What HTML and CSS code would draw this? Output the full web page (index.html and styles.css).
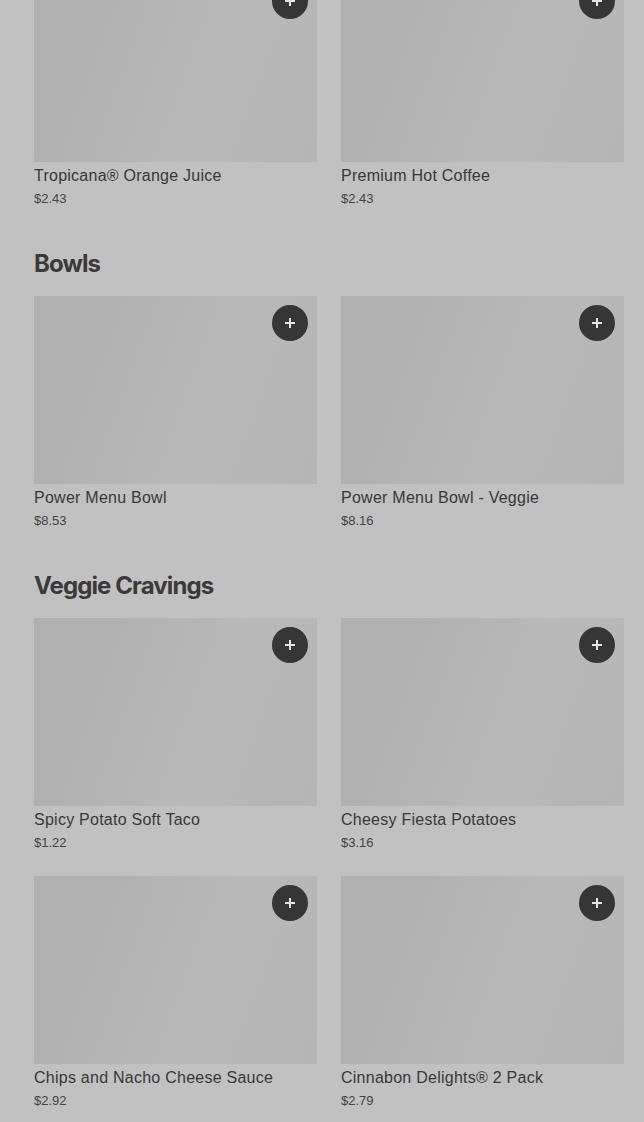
FILE: index.html
```html
<!DOCTYPE html>
<html lang="en">
<head>
<meta charset="UTF-8">
<meta name="viewport" content="width=device-width, initial-scale=1.0">
<title>Menu</title>
<link rel="stylesheet" href="styles.css">
</head>
<body>
<div class="menu">
    <section class="section first">
        <div class="grid">
            <div class="card">
                <div class="thumb"><button class="add" aria-label="Add"><svg viewBox="0 0 12 12" width="12" height="12"><path d="M6 1v10M1 6h10"/></svg></button></div>
                <div class="name">Tropicana® Orange Juice</div>
                <div class="price">$2.43</div>
            </div>
            <div class="card">
                <div class="thumb"><button class="add" aria-label="Add"><svg viewBox="0 0 12 12" width="12" height="12"><path d="M6 1v10M1 6h10"/></svg></button></div>
                <div class="name">Premium Hot Coffee</div>
                <div class="price">$2.43</div>
            </div>
        </div>
    </section>

    <section class="section">
        <h2>Bowls</h2>
        <div class="grid">
            <div class="card">
                <div class="thumb"><button class="add" aria-label="Add"><svg viewBox="0 0 12 12" width="12" height="12"><path d="M6 1v10M1 6h10"/></svg></button></div>
                <div class="name">Power Menu Bowl</div>
                <div class="price">$8.53</div>
            </div>
            <div class="card">
                <div class="thumb"><button class="add" aria-label="Add"><svg viewBox="0 0 12 12" width="12" height="12"><path d="M6 1v10M1 6h10"/></svg></button></div>
                <div class="name">Power Menu Bowl - Veggie</div>
                <div class="price">$8.16</div>
            </div>
        </div>
    </section>

    <section class="section">
        <h2>Veggie Cravings</h2>
        <div class="grid">
            <div class="card">
                <div class="thumb"><button class="add" aria-label="Add"><svg viewBox="0 0 12 12" width="12" height="12"><path d="M6 1v10M1 6h10"/></svg></button></div>
                <div class="name">Spicy Potato Soft Taco</div>
                <div class="price">$1.22</div>
            </div>
            <div class="card">
                <div class="thumb"><button class="add" aria-label="Add"><svg viewBox="0 0 12 12" width="12" height="12"><path d="M6 1v10M1 6h10"/></svg></button></div>
                <div class="name">Cheesy Fiesta Potatoes</div>
                <div class="price">$3.16</div>
            </div>
            <div class="card">
                <div class="thumb"><button class="add" aria-label="Add"><svg viewBox="0 0 12 12" width="12" height="12"><path d="M6 1v10M1 6h10"/></svg></button></div>
                <div class="name">Chips and Nacho Cheese Sauce</div>
                <div class="price">$2.92</div>
            </div>
            <div class="card">
                <div class="thumb"><button class="add" aria-label="Add"><svg viewBox="0 0 12 12" width="12" height="12"><path d="M6 1v10M1 6h10"/></svg></button></div>
                <div class="name">Cinnabon Delights® 2 Pack</div>
                <div class="price">$2.79</div>
            </div>
        </div>
    </section>
</div>
</body>
</html>
```

FILE: styles.css
```css
body {
    margin: 0;
    padding: 0;
    background-color: #c1c1c1;
    font-family: "Liberation Sans", Arial, sans-serif;
    color: #333;
    overflow: hidden;
}
.menu {
    padding: 0 20px 0 34px;
    margin-top: -26px;
    display: flex;
    flex-direction: column;
    gap: 40px;
}
h2 {
    margin: 0 0 16px;
    font-family: Inter, sans-serif;
    font-size: 24px;
    font-weight: 700;
    line-height: 32px;
    letter-spacing: -0.9px;
    color: #3a3a3a;
}
.grid {
    display: grid;
    grid-template-columns: 1fr 1fr;
    gap: 24px;
}
.thumb {
    height: 188px;
    position: relative;
    background: linear-gradient(110deg, #b0b0b0 20%, #b9b9b9 60%, #b5b5b5);
}
.add {
    position: absolute;
    top: 9px;
    right: 9px;
    width: 36px;
    height: 36px;
    border: 0;
    border-radius: 50%;
    background-color: #363636;
    padding: 0;
    display: flex;
    align-items: center;
    justify-content: center;
}
.add svg {
    stroke: #e6e6e6;
    stroke-width: 2;
    fill: none;
}
.name {
    margin-top: 4px;
    font-size: 16px;
    line-height: 20px;
    letter-spacing: 0.25px;
    color: #383838;
}
.price {
    margin-top: 4px;
    font-size: 13px;
    line-height: 18px;
    color: #444;
}
```
